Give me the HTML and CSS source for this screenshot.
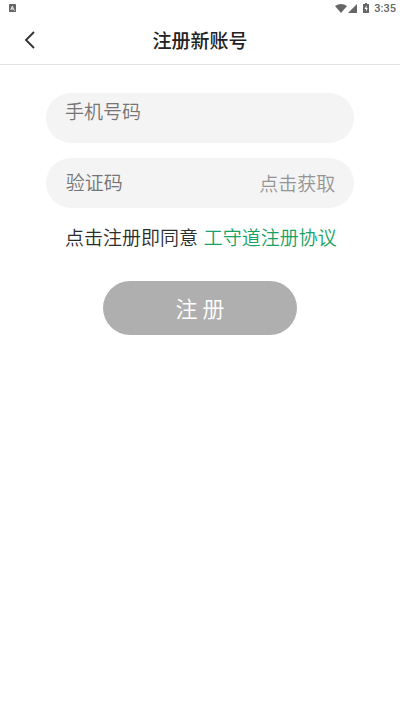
FILE: index.html
```html
<!DOCTYPE html>
<html lang="zh-CN">
<head>
<meta charset="utf-8">
<title>注册新账号</title>
<link rel="stylesheet" href="styles.css">
</head>
<body>
<div class="status">
  <svg class="app" width="7" height="8" viewBox="0 0 7 8"><rect width="7" height="8" rx="0.6" fill="#666"/><path d="M1.8 5.8 3.3 2.2 4.6 5.6 5.8 6.5M2.3 4.9h2" stroke="#fff" stroke-width="0.9" fill="none"/></svg>
  <div class="right">
    <svg width="12" height="9" viewBox="0 0 12 9"><path d="M0 2Q6-2 12 2L6 9Z" fill="#666"/></svg>
    <svg class="signal" width="9" height="9" viewBox="0 0 9 9"><path d="M9 0V9H0Z" fill="#666"/></svg>
    <svg class="battery" width="6" height="10" viewBox="0 0 6 10"><path d="M0 1h2V0h2v1h2v9H0Z" fill="#666"/><path d="M3.5 2.5 1.5 6H3v2.5L4.7 5H3.5Z" fill="#fff"/></svg>
    <span>3:35</span>
  </div>
</div>
<header class="header">
  <svg class="back" width="12" height="18" viewBox="0 0 12 18"><path d="M10 1 2 9l8 8" fill="none" stroke="#333" stroke-width="1.9"/></svg>
  <h1>注册新账号</h1>
</header>
<main class="form">
  <div class="field phone"><span>手机号码</span></div>
  <div class="field code"><span>验证码</span><span class="get">点击获取</span></div>
  <p class="terms">点击注册即同意 <a>工守道注册协议</a></p>
  <button class="submit">注 册</button>
</main>
</body>
</html>
```
FILE: styles.css
```css
* { box-sizing: border-box; }
body { margin: 0; background: #fff; color: #222; font-family: "Noto Sans CJK SC", sans-serif; }
svg { display: block; }
.status { height: 16px; display: flex; justify-content: space-between; align-items: center; padding: 0 4px 0 9px; }
.right { display: flex; align-items: center; font: 500 11px/16px Roboto, sans-serif; color: #666; }
.right span { padding-top: 1px; }
.signal { margin-left: 1px; }
.battery { margin: 0 5px 0 6px; }
.header { height: 49px; border-bottom: 1px solid #e2e2e2; display: grid; grid-template-columns: 60px 1fr 60px; align-items: center; }
.back { margin-left: 24px; }
h1 { margin: 0; font-size: 19px; line-height: 28px; font-weight: 500; text-align: center; }
.form { padding: 28.4px 45.7px 0; display: flex; flex-direction: column; }
.field { height: 50px; border-radius: 25px; background: #f4f4f4; color: #757575; font-size: 19px; font-weight: 350; line-height: 28px; display: flex; justify-content: space-between; padding: 0 19px 0 20px; }
.phone { padding: 4px 0 0 19.3px; }
.code { margin-top: 14.8px; padding-bottom: 2px; align-items: center; }
.get { color: #949494; padding-top: 1px; }
.terms { margin: 14.8px 0 0 19.3px; font-size: 19px; font-weight: 350; line-height: 28px; white-space: nowrap; word-spacing: 1.5px; color: #2c2c2c; }
.terms a { color: #18a267; }
.submit { align-self: center; margin: 30px 0 0; width: 194px; height: 54px; border: 0; border-radius: 27px; background: #afafaf; color: #fff; font: 350 22px/32px "Noto Sans CJK SC", sans-serif; padding: 0 0 1px; }
```
